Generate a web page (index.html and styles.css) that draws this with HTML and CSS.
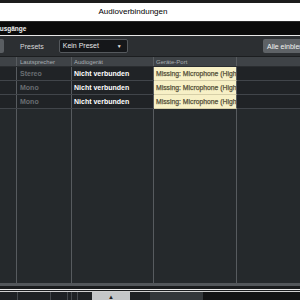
FILE: index.html
```html
<!DOCTYPE html>
<html lang="de">
<head>
  <meta charset="UTF-8" />
  <title>Audioverbindungen</title>
  <link rel="stylesheet" href="styles.css">
</head>
<body>
  <div class="top-strip"></div>
  <div class="title-bar">Audioverbindungen</div>
  <div class="tab-bar"><span class="tab">Ausgänge</span></div>

  <div class="toolbar">
    <button class="edge-btn"></button>
    <span class="label">Presets</span>
    <div class="select">Kein Preset <span class="arrow">▼</span></div>
    <div class="show-all-wrap"><button class="show-all">Alle einblenden</button></div>
  </div>

  <div class="grid">
    <div class="row head">
      <div class="c c0"></div>
      <div class="c c1">Lautsprecher</div>
      <div class="c c2">Audiogerät</div>
      <div class="c c3">Geräte-Port</div>
      <div class="c c4"></div>
    </div>
    <div class="row">
      <div class="c c0"></div>
      <div class="c c1 dim">Stereo</div>
      <div class="c c2 bold">Nicht verbunden</div>
      <div class="c c3 missing">Missing: Microphone (High Definition Audio)</div>
      <div class="c c4"></div>
    </div>
    <div class="row">
      <div class="c c0"></div>
      <div class="c c1 dim">Mono</div>
      <div class="c c2 bold">Nicht verbunden</div>
      <div class="c c3 missing">Missing: Microphone (High Definition Audio)</div>
      <div class="c c4"></div>
    </div>
    <div class="row">
      <div class="c c0"></div>
      <div class="c c1 dim">Mono</div>
      <div class="c c2 bold">Nicht verbunden</div>
      <div class="c c3 missing">Missing: Microphone (High Definition Audio)</div>
      <div class="c c4"></div>
    </div>
    <div class="row filler">
      <div class="c c0"></div>
      <div class="c c1"></div>
      <div class="c c2"></div>
      <div class="c c3"></div>
      <div class="c c4"></div>
    </div>
  </div>

  <div class="bottom">
    <div class="b-gap"></div>
    <div class="b-line"></div>
    <div class="b-gap2"></div>
    <div class="b-line dim-line"></div>
    <div class="taskbar">
      <div class="t-cell" style="width:18px"></div>
      <div class="t-cell" style="width:33px"></div>
      <div class="t-cell" style="width:17px"></div>
      <div class="t-cell" style="width:4px"></div>
      <div class="t-cell" style="width:6px"></div>
      <div class="t-cell no-line" style="width:14px"></div>
      <div class="t-btn">▲</div>
      <div class="t-cell no-line" style="width:20px"></div>
      <div class="t-cell lit" style="width:53px"></div>
      <div class="t-rest"></div>
    </div>
  </div>
</body>
</html>
```

FILE: styles.css
```css
body {
  margin: 0;
  width: 300px;
  height: 300px;
  overflow: hidden;
  background: #25292c;
  font-family: "Liberation Sans", Arial, sans-serif;
  font-size: 7px;
  display: flex;
  flex-direction: column;
}

.top-strip {
  height: 3px;
  background: #1c1c1c;
}

.title-bar {
  height: 18px;
  background: #ffffff;
  color: #000;
  font-size: 8px;
  line-height: 18px;
  text-align: center;
  padding-right: 34px;
}

.tab-bar {
  height: 13px;
  background: #0b0b0b;
  border-top: 1px solid #2a2a2a;
  border-bottom: 1px solid #e8e8e8;
  color: #f0f0f0;
  overflow: hidden;
}

.tab {
  display: block;
  margin-left: -5px;
  line-height: 14px;
  font-weight: bold;
  font-size: 6.5px;
}

.toolbar {
  height: 20px;
  background: #2c2f32;
  display: flex;
  align-items: center;
  border-bottom: 1px solid #1c1e20;
}

.edge-btn {
  width: 4px;
  height: 14px;
  margin: 0;
  padding: 0;
  border: none;
  background: #5a5e62;
  border-radius: 0 2px 2px 0;
}

.label {
  margin-left: 16px;
  color: #d8d8d8;
  font-size: 7px;
}

.select {
  margin-left: 15px;
  width: 69px;
  height: 14px;
  box-sizing: border-box;
  border: 1px solid #55595d;
  border-radius: 2px;
  background: #15171a;
  color: #e8e8e8;
  font-size: 7px;
  line-height: 12px;
  padding-left: 3px;
  display: flex;
}

.arrow {
  margin-left: auto;
  margin-right: 5px;
  font-size: 5px;
}

.show-all-wrap {
  margin-left: auto;
  width: 37px;
  overflow: hidden;
  display: flex;
}

.show-all {
  flex-shrink: 0;
  height: 14px;
  padding: 0 4px;
  border: none;
  border-radius: 2px;
  background: #5e6266;
  color: #f2f2f2;
  font-family: "Liberation Sans", Arial, sans-serif;
  font-size: 7px;
  white-space: nowrap;
}

.grid {
  flex: 1;
  display: flex;
  flex-direction: column;
}

.row {
  display: flex;
  height: 13px;
  border-bottom: 1px solid #41454a;
  background: #202326;
}

.row.head {
  height: 9px;
  background: #3f4347;
  border-bottom: 1px solid #2a2d30;
  color: #a9adb1;
  font-size: 6px;
}

.row.filler {
  flex: 1;
  background: #25292c;
  border-bottom: 3px solid #53575b;
}

.c {
  box-sizing: border-box;
  border-right: 1px solid #575b5f;
  padding-left: 3px;
  white-space: nowrap;
  overflow: hidden;
  display: flex;
  align-items: center;
}

.c0 { width: 17px; padding: 0; }
.c1 { width: 55px; }
.c2 { width: 82px; padding-left: 2px; }
.c3 { width: 83px; padding-left: 2px; }
.c4 { flex: 1; border-right: none; }

.dim {
  color: #6a6e72;
  font-weight: bold;
}

.bold {
  color: #ffffff;
  font-weight: bold;
}

.missing {
  background: #f7f0c6;
  color: #56513a;
  font-size: 6.8px;
  -webkit-text-stroke: 0.25px #56513a;
  margin-bottom: -1px;
  border-bottom: 1px solid #d6cfa8;
}

.bottom {
  display: flex;
  flex-direction: column;
}

.b-gap {
  height: 3px;
  background: #1a1c1e;
}

.b-line {
  height: 1px;
  background: #f4f4f4;
}

.dim-line {
  background: #cfcfcf;
}

.b-gap2 {
  height: 1px;
  background: #1a1c1e;
}

.taskbar {
  height: 8px;
  display: flex;
  background: #1e2124;
}

.t-cell {
  box-sizing: border-box;
  border-right: 1px solid #44484c;
}

.no-line {
  border-right: none;
}

.lit {
  background: #33373a;
  border-right: none;
}

.t-btn {
  width: 38px;
  background: #c4c6c8;
  color: #222;
  font-size: 6px;
  text-align: center;
  line-height: 10px;
}

.t-rest {
  flex: 1;
  background: #121314;
}
```
